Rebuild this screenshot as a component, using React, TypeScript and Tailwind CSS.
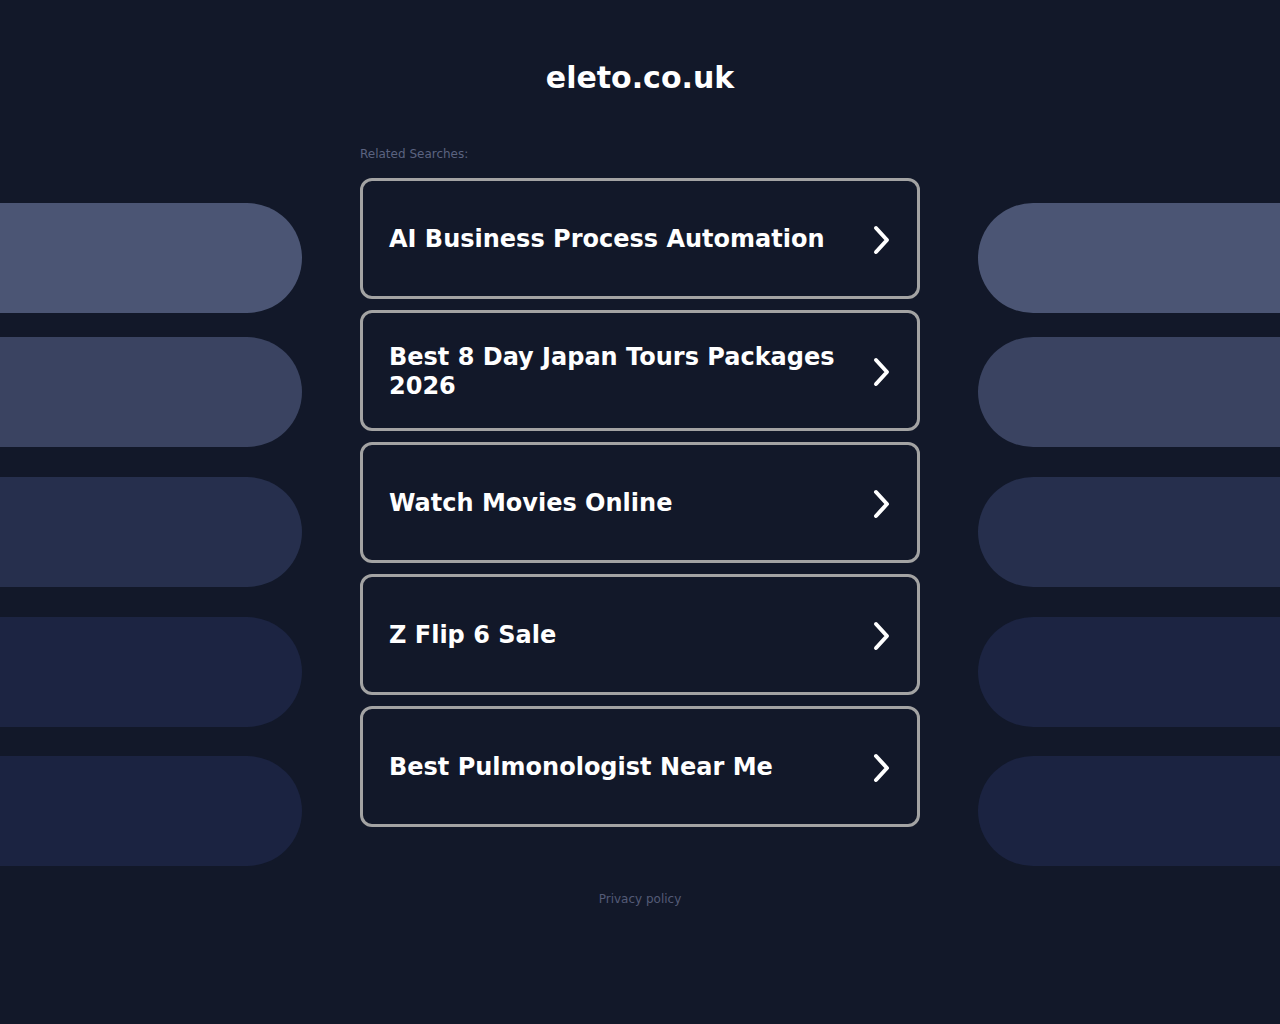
const searches = [
  "AI Business Process Automation",
  "Best 8 Day Japan Tours Packages 2026",
  "Watch Movies Online",
  "Z Flip 6 Sale",
  "Best Pulmonologist Near Me",
];

// side decoration pills, top to bottom
const pills = [
  { color: "bg-[#4b5574]", mt: "mt-0" },
  { color: "bg-[#3a4361]", mt: "mt-[24px]" },
  { color: "bg-[#262f4d]", mt: "mt-[30px]" },
  { color: "bg-[#1c2442]", mt: "mt-[30px]" },
  { color: "bg-[#1b2341]", mt: "mt-[29px]" },
];

function Chevron() {
  return (
    <svg width="20" height="30" viewBox="0 0 20 30" fill="none" className="shrink-0">
      <path
        d="M5 3 L16 15 L5 27"
        stroke="white"
        strokeWidth="4"
        strokeLinecap="round"
        strokeLinejoin="round"
      />
    </svg>
  );
}

function Pills({ side }: { side: "left" | "right" }) {
  return (
    <div className="w-[302px] shrink-0 flex flex-col pt-[57px]">
      {pills.map((p, i) => (
        <div
          key={i}
          className={`h-[110px] w-full ${p.color} ${p.mt} ${
            side === "left" ? "rounded-r-full" : "rounded-l-full"
          }`}
        />
      ))}
    </div>
  );
}

export default function App() {
  return (
    <div
      className="min-h-screen w-full bg-[#121829] text-white"
      style={{ fontFamily: "'DejaVu Sans', sans-serif" }}
    >
      <header className="pt-[59px] text-center">
        <h1 className="text-[30px] font-bold leading-[38px]">eleto.co.uk</h1>
      </header>

      <div className="mt-[49px] flex justify-between">
        <Pills side="left" />

        <div className="w-[560px] shrink-0">
          <p className="text-[12px] leading-[16px] text-[#5b6380]">Related Searches:</p>
          <div className="mt-[16px] flex flex-col gap-[11px]">
            {searches.map((s) => (
              <a
                key={s}
                href="#"
                className="flex h-[121px] items-center justify-between rounded-[12px] border-[3px] border-[#a3a3a3] pl-[26px] pr-[26px] pt-[2px]"
              >
                <span className="max-w-[450px] text-[24px] font-bold leading-[29px]">{s}</span>
                <Chevron />
              </a>
            ))}
          </div>
        </div>

        <Pills side="right" />
      </div>

      <footer className="mt-[20px] text-center">
        <a href="#" className="text-[12px] text-[#545b77]">
          Privacy policy
        </a>
      </footer>
    </div>
  );
}
